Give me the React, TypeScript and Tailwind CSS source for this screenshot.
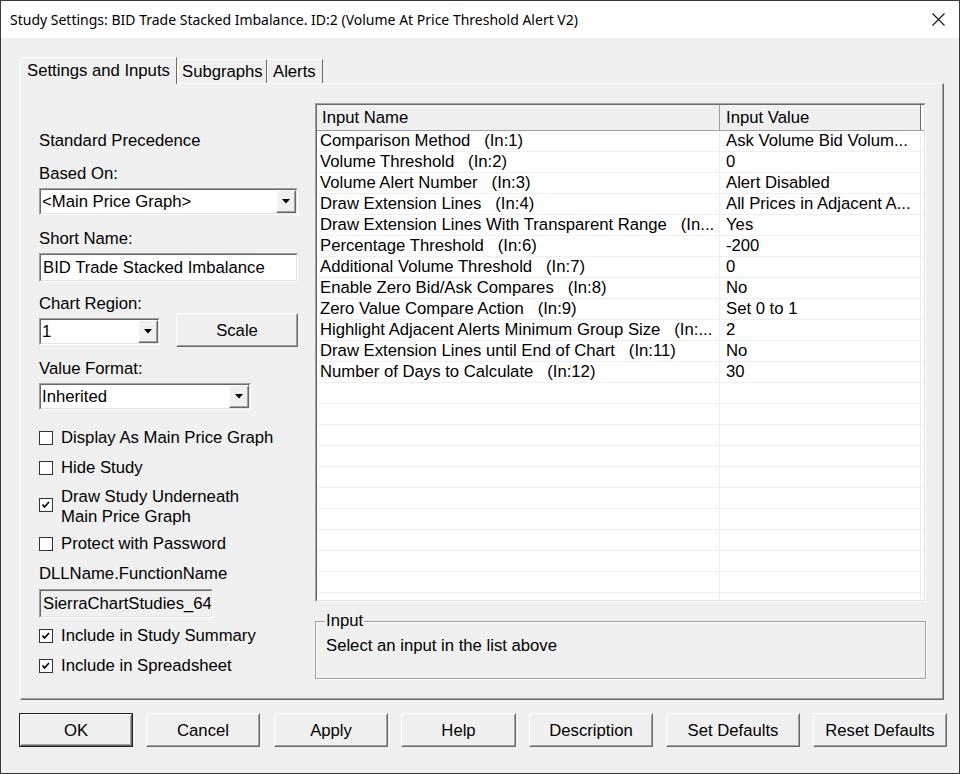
import React from "react";

const rows: [string, string][] = [
  ["Comparison Method   (In:1)", "Ask Volume Bid Volum..."],
  ["Volume Threshold   (In:2)", "0"],
  ["Volume Alert Number   (In:3)", "Alert Disabled"],
  ["Draw Extension Lines   (In:4)", "All Prices in Adjacent A..."],
  ["Draw Extension Lines With Transparent Range   (In...", "Yes"],
  ["Percentage Threshold   (In:6)", "-200"],
  ["Additional Volume Threshold   (In:7)", "0"],
  ["Enable Zero Bid/Ask Compares   (In:8)", "No"],
  ["Zero Value Compare Action   (In:9)", "Set 0 to 1"],
  ["Highlight Adjacent Alerts Minimum Group Size   (In:...", "2"],
  ["Draw Extension Lines until End of Chart   (In:11)", "No"],
  ["Number of Days to Calculate   (In:12)", "30"],
];

function Sunken({ className = "", inner = "", children }: { className?: string; inner?: string; children?: React.ReactNode }) {
  return (
    <div className={`border border-t-[#a0a0a0] border-l-[#a0a0a0] border-b-white border-r-white ${className}`}>
      <div className={`h-full border border-t-[#696969] border-l-[#696969] border-b-[#e3e3e3] border-r-[#e3e3e3] ${inner}`}>{children}</div>
    </div>
  );
}

function Raised({ className = "", inner = "", children }: { className?: string; inner?: string; children?: React.ReactNode }) {
  return (
    <div className={`border border-t-white border-l-white border-b-[#696969] border-r-[#696969] bg-[#f0f0f0] ${className}`}>
      <div className={`h-full border border-t-[#f0f0f0] border-l-[#f0f0f0] border-b-[#a0a0a0] border-r-[#a0a0a0] ${inner}`}>{children}</div>
    </div>
  );
}

function Label({ text, className = "" }: { text: string; className?: string }) {
  return <div className={`h-[20px] pt-[1px] leading-[20px] whitespace-nowrap ${className}`}>{text}</div>;
}

function Combo({ text, className = "" }: { text: string; className?: string }) {
  return (
    <Sunken className={`h-[27px] ${className}`} inner="bg-white flex">
      <div className="flex-1 pl-[1px] leading-[23px] whitespace-nowrap overflow-hidden">{text}</div>
      <Raised className="w-[20px] h-[23px]" inner="flex items-center justify-center">
        <svg width="8" height="5" viewBox="0 0 8 5">
          <polygon points="0,0 8,0 4,4.5" fill="#000" />
        </svg>
      </Raised>
    </Sunken>
  );
}

function CheckMark() {
  return (
    <svg width="12" height="12" viewBox="0 0 12 12">
      <polyline points="2.5,5.5 4.5,8 9,3" fill="none" stroke="#000" strokeWidth="1.7" />
    </svg>
  );
}

function Check({ label, checked = false, className = "" }: { label: React.ReactNode; checked?: boolean; className?: string }) {
  return (
    <div className={`flex items-center h-[20px] ${className}`}>
      <div className="w-[14px] h-[14px] border border-[#333] bg-white flex items-center justify-center">
        {checked && <CheckMark />}
      </div>
      <div className="ml-[8px] leading-[20px] whitespace-nowrap">{label}</div>
    </div>
  );
}

function Button({ label, w, ml, def = false }: { label: string; w: string; ml: string; def?: boolean }) {
  const inner = (
    <Raised className="h-full" inner="flex items-center justify-center">
      <span className="leading-[20px] mt-[2px]">{label}</span>
    </Raised>
  );
  return def ? (
    <div className={`h-[34px] border border-[#222] ${w} ${ml}`}>{inner}</div>
  ) : (
    <div className={`h-[34px] ${w} ${ml}`}>{inner}</div>
  );
}

export default function App() {
  const emptyRows = Array.from({ length: 12 });
  return (
    <div className="w-[960px] h-[774px] flex flex-col bg-[#f0f0f0] border border-[#3a3a3a] text-[16.7px] text-black font-['Liberation_Sans',Arial,sans-serif] overflow-hidden">
      {/* title bar */}
      <div className="h-[37px] bg-white flex items-center justify-between pl-[9px] pr-[14px]">
        <span className="font-['Noto_Sans',sans-serif] text-[14px] text-black">
          Study Settings: BID Trade Stacked Imbalance. ID:2 (Volume At Price Threshold Alert V2)
        </span>
        <svg width="13" height="13" viewBox="0 0 13 13">
          <line x1="0.5" y1="0.5" x2="12.5" y2="12.5" stroke="#111" strokeWidth="1.1" />
          <line x1="12.5" y1="0.5" x2="0.5" y2="12.5" stroke="#111" strokeWidth="1.1" />
        </svg>
      </div>

      <div className="pl-[19px] pt-[19px] flex flex-col">
        {/* tabs */}
        <div className="flex items-end h-[26px]">
          <div className="relative z-10 mb-[-1px] h-[27px] w-[157px] bg-[#f0f0f0] border-t border-l border-t-white border-l-white border-r border-r-[#696969] pl-[6px] pt-[3px] leading-[20px] whitespace-nowrap">
            Settings and Inputs
          </div>
          <div className="h-[24px] w-[90px] bg-[#f0f0f0] border-t border-l border-t-white border-l-white border-r border-r-[#696969] pl-[4px] pt-[2px] leading-[20px] whitespace-nowrap">
            Subgraphs
          </div>
          <div className="h-[24px] w-[56px] bg-[#f0f0f0] border-t border-l border-t-white border-l-white border-r border-r-[#696969] pl-[5px] pt-[2px] leading-[20px] whitespace-nowrap">
            Alerts
          </div>
        </div>

        {/* panel */}
        <div className="w-[924px] h-[617px] border border-t-white border-l-white border-b-[#696969] border-r-[#696969]">
          <div className="h-full border-r border-b border-r-[#a0a0a0] border-b-[#a0a0a0] flex pl-[18px]">
            {/* left column */}
            <div className="w-[259px] flex flex-col">
              <Label className="mt-[46px]" text="Standard Precedence" />
              <Label className="mt-[13px]" text="Based On:" />
              <Combo className="mt-[5px] w-[259px]" text="<Main Price Graph>" />
              <Label className="mt-[13px]" text="Short Name:" />
              <Sunken className="mt-[5px] h-[29px] w-[259px]" inner="bg-white pl-[2px] leading-[25px] whitespace-nowrap overflow-hidden">
                BID Trade Stacked Imbalance
              </Sunken>
              <Label className="mt-[11px]" text="Chart Region:" />
              <div className="flex items-start">
                <Combo className="mt-[5px] w-[121px]" text="1" />
                <div className="ml-[16px] w-[122px]">
                  <Button label="Scale" w="w-[122px]" ml="" />
                </div>
              </div>
              <Label className="mt-[11px]" text="Value Format:" />
              <Combo className="mt-[5px] w-[212px]" text="Inherited" />
              <Check className="mt-[18px]" label="Display As Main Price Graph" />
              <Check className="mt-[10px]" label="Hide Study" />
              <div className="mt-[9px] flex items-start h-[40px]">
                <div className="mt-[11px] w-[14px] h-[14px] border border-[#333] bg-white flex items-center justify-center">
                  <CheckMark />
                </div>
                <div className="ml-[8px] leading-[20px]">
                  Draw Study Underneath
                  <br />
                  Main Price Graph
                </div>
              </div>
              <Check className="mt-[7px]" label="Protect with Password" />
              <div className="mt-[10px] leading-[20px]">DLLName.FunctionName</div>
              <Sunken className="mt-[5px] h-[29px] w-[174px]" inner="bg-[#f0f0f0] pl-[2px] leading-[25px] whitespace-nowrap overflow-hidden">
                SierraChartStudies_64
              </Sunken>
              <Check className="mt-[8px]" label="Include in Study Summary" checked />
              <Check className="mt-[10px]" label="Include in Spreadsheet" checked />
            </div>

            {/* right column */}
            <div className="ml-[17px] w-[611px] pt-[19px] flex flex-col">
              <Sunken className="h-[499px] w-[611px]" inner="bg-white overflow-hidden flex flex-col">
                <div className="flex h-[26px] shrink-0 bg-[#f0f0f0] border-b border-b-[#a0a0a0]">
                  <div className="w-[403px] border-r border-r-[#a0a0a0] pl-[5px] leading-[25px]">Input Name</div>
                  <div className="w-[201px] border-r border-r-[#696969] pl-[6px] leading-[25px]">Input Value</div>
                  <div className="flex-1 bg-white" />
                </div>
                {rows.map(([n, v], i) => (
                  <div key={i} className="flex h-[21px] shrink-0 border-b border-b-[#f0f0f0]">
                    <div className="w-[403px] border-r border-r-[#f0f0f0] pl-[3px] leading-[20px] whitespace-pre overflow-hidden">{n}</div>
                    <div className="w-[201px] border-r border-r-[#f0f0f0] pl-[6px] leading-[20px] whitespace-pre overflow-hidden">{v}</div>
                  </div>
                ))}
                {emptyRows.map((_, i) => (
                  <div key={"e" + i} className="flex h-[21px] shrink-0 border-b border-b-[#f0f0f0]">
                    <div className="w-[403px] border-r border-r-[#f0f0f0]" />
                    <div className="w-[201px] border-r border-r-[#f0f0f0]" />
                  </div>
                ))}
              </Sunken>
              <fieldset className="mt-[9px] h-[68px] w-[611px] border border-[#a0a0a0] shadow-[inset_1px_1px_0_#fff,1px_1px_0_#fff]">
                <legend className="ml-[9px] px-[1px] leading-[20px]">Input</legend>
                <div className="pl-[10px] pt-[5px] leading-[20px]">Select an input in the list above</div>
              </fieldset>
            </div>
          </div>
        </div>

        {/* buttons */}
        <div className="flex mt-[13px] ml-[-1px]">
          <Button label="OK" w="w-[114px]" ml="" def />
          <Button label="Cancel" w="w-[114px]" ml="ml-[13px]" />
          <Button label="Apply" w="w-[114px]" ml="ml-[14px]" />
          <Button label="Help" w="w-[115px]" ml="ml-[13px]" />
          <Button label="Description" w="w-[124px]" ml="ml-[13px]" />
          <Button label="Set Defaults" w="w-[134px]" ml="ml-[13px]" />
          <Button label="Reset Defaults" w="w-[134px]" ml="ml-[13px]" />
        </div>
      </div>
    </div>
  );
}
